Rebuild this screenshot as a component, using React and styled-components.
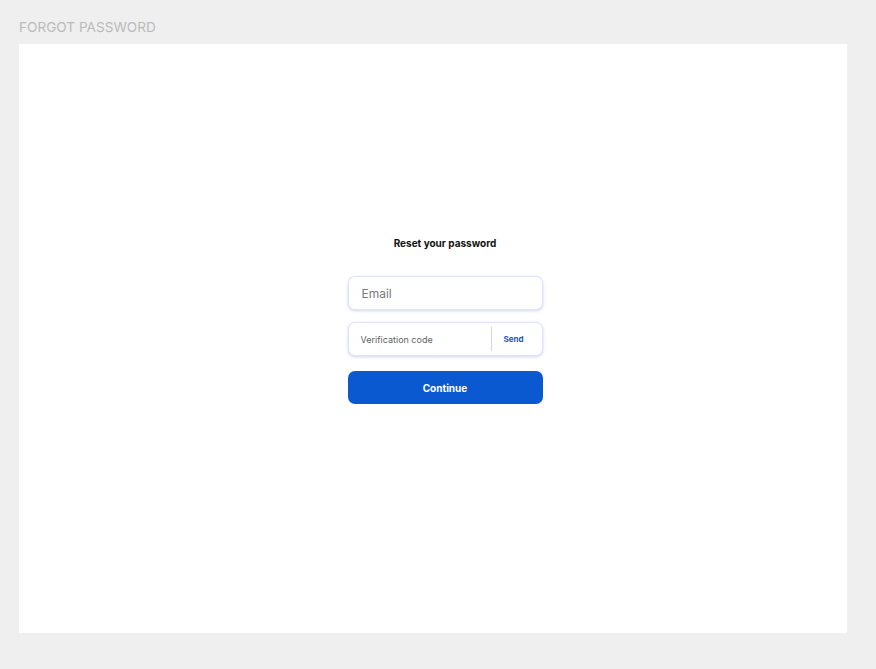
import React from "react";
import styled, { createGlobalStyle } from "styled-components";

const GlobalStyle = createGlobalStyle`
  html, body {
    margin: 0;
    padding: 0;
    background: #efefef;
    font-family: Inter, "Noto Sans", sans-serif;
  }
`;

const Page = styled.div`
  width: 876px;
  height: 669px;
  box-sizing: border-box;
  padding: 18px 29px 36px 19px;
  display: flex;
  flex-direction: column;
`;

const PageTitle = styled.div`
  font-size: 13.6px;
  line-height: 18px;
  color: #bbbbbb;
  height: 26px;
`;

const Card = styled.div`
  flex: 1;
  background: #ffffff;
  display: flex;
  flex-direction: column;
  align-items: center;
  padding-top: 189px;
  padding-left: 24px;
`;

const Heading = styled.h1`
  margin: 0 0 23px;
  font-size: 10px;
  line-height: 20px;
  font-weight: 700;
  color: #111;
`;

const Form = styled.form`
  width: 195px;
  display: flex;
  flex-direction: column;
  gap: 12px;
`;

const Field = styled.div`
  height: 34px;
  box-sizing: border-box;
  border-radius: 7px;
  border: 1px solid #dfe3fb;
  box-shadow: 0 1px 3px rgba(120, 130, 220, 0.35);
  background: #fff;
  display: flex;
  align-items: center;
`;

const Input = styled.input`
  flex: 1;
  min-width: 0;
  border: none;
  outline: none;
  background: transparent;
  font-family: inherit;
  padding: 0 0 0 ${(p) => p.$pad}px;
  font-size: ${(p) => p.$size}px;
  color: #333;
  &::placeholder {
    color: ${(p) => p.$ph};
  }
`;

const SendButton = styled.button`
  height: 24px;
  width: 51px;
  border: none;
  border-left: 1px solid #d6d6d6;
  background: transparent;
  color: #1556c6;
  font-family: inherit;
  font-size: 8px;
  font-weight: 700;
  cursor: pointer;
  padding: 0 6px 0 0;
`;

const Continue = styled.button`
  margin-top: 3px;
  height: 33px;
  border: none;
  border-radius: 7px;
  background: #0a59d1;
  color: #fff;
  font-family: inherit;
  font-size: 10px;
  font-weight: 700;
  cursor: pointer;
`;

export default function App() {
  return (
    <>
      <GlobalStyle />
      <Page>
        <PageTitle>FORGOT PASSWORD</PageTitle>
        <Card>
          <Heading>Reset your password</Heading>
          <Form onSubmit={(e) => e.preventDefault()}>
            <Field>
              <Input placeholder="Email" $pad={13} $size={12} $ph="#7a7a7a" />
            </Field>
            <Field>
              <Input
                placeholder="Verification code"
                $pad={12}
                $size={9}
                $ph="#5f5f5f"
              />
              <SendButton type="button">Send</SendButton>
            </Field>
            <Continue type="submit">Continue</Continue>
          </Form>
        </Card>
      </Page>
    </>
  );
}
